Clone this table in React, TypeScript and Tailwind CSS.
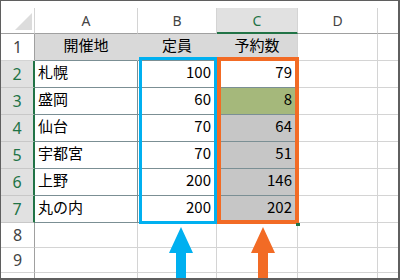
const jp = "font-['Noto_Sans_CJK_JP','Noto_Sans',sans-serif]"

type Row = { no: number; a: string; b: number; c: number; cBg: string }

const rows: Row[] = [
    { no: 2, a: "札幌", b: 100, c: 79, cBg: "bg-white" },
    { no: 3, a: "盛岡", b: 60, c: 8, cBg: "bg-[#a5b87b]" },
    { no: 4, a: "仙台", b: 70, c: 64, cBg: "bg-[#c6c6c6]" },
    { no: 5, a: "宇都宮", b: 70, c: 51, cBg: "bg-[#c6c6c6]" },
    { no: 6, a: "上野", b: 200, c: 146, cBg: "bg-[#c6c6c6]" },
    { no: 7, a: "丸の内", b: 200, c: 202, cBg: "bg-[#c6c6c6]" },
]

function RowHead({ no, selected }: { no: number; selected?: boolean }) {
    return (
        <div
            className={
                selected
                    ? "w-[34px] shrink-0 flex items-center justify-center border-b border-b-[#c8c8c8] border-r-2 border-r-[#217346] bg-[#e1e1e1] text-[#217346] text-[16px] font-['Noto_Sans',sans-serif]"
                    : "w-[34px] shrink-0 flex items-center justify-center border-b border-b-[#d4d4d4] border-r border-r-[#a0a0a0] bg-white text-[#444] text-[16px] font-['Noto_Sans',sans-serif]"
            }
        >
            {no}
        </div>
    )
}

function EmptyTail() {
    return (
        <>
            <div className="w-[80px] shrink-0 border-r border-b border-[#d4d4d4]" />
            <div className="flex-1 border-b border-[#d4d4d4]" />
        </>
    )
}

function ColHead({ label, w, selected }: { label: string; w: string; selected?: boolean }) {
    return (
        <div
            className={`${w} shrink-0 flex items-center justify-center text-[14px] font-['Noto_Sans',sans-serif] border-r border-r-[#d4d4d4] ${
                selected
                    ? "bg-[#e1e1e1] text-[#217346] border-b-2 border-b-[#217346]"
                    : "bg-white text-[#444] border-b border-b-[#a0a0a0]"
            }`}
        >
            {label}
        </div>
    )
}

export default function App() {
    return (
        <div className={`relative w-[400px] h-[280px] overflow-hidden bg-white border-t border-l border-r-2 border-b-2 border-[#5f5f5f] ${jp}`}>
            <div className="h-[7px]" />

            {/* column headers */}
            <div className="flex h-[26px]">
                <div className="relative w-[34px] shrink-0 border-r border-r-[#d4d4d4] border-b border-b-[#a0a0a0]">
                    <svg className="absolute left-[14px] top-[5px]" width="18" height="18" viewBox="0 0 18 18">
                        <polygon points="0,17 17,17 17,0" fill="#dcdcdc" />
                    </svg>
                </div>
                <ColHead label="A" w="w-[103px]" />
                <ColHead label="B" w="w-[79px]" />
                <ColHead label="C" w="w-[81px]" selected />
                <ColHead label="D" w="w-[80px]" />
                <div className="flex-1 border-b border-b-[#a0a0a0]" />
            </div>

            {/* row 1 */}
            <div className="flex h-[27px]">
                <RowHead no={1} />
                <div className="w-[103px] shrink-0 flex items-center justify-center pb-[3px] bg-[#d9d9d9] border-r border-r-[#d9d9d9] border-b border-b-[#7b8f94] text-[15px] text-black">
                    開催地
                </div>
                <div className="w-[79px] shrink-0 flex items-center justify-center pb-[3px] bg-[#d9d9d9] border-r border-r-[#d9d9d9] border-b border-b-[#7b8f94] text-[15px] text-black">
                    定員
                </div>
                <div className="w-[81px] shrink-0 flex items-center justify-center pb-[3px] bg-[#d9d9d9] border-r border-r-[#d4d4d4] border-b border-b-[#7b8f94] text-[15px] text-black">
                    予約数
                </div>
                <EmptyTail />
            </div>

            {rows.map((r) => (
                <div key={r.no} className="flex h-[27px]">
                    <RowHead no={r.no} selected />
                    <div className="w-[103px] shrink-0 flex items-center pl-[3px] pb-[3px] border-r border-b border-[#7b8f94] text-[15px] text-black">
                        {r.a}
                    </div>
                    <div className="w-[79px] shrink-0 flex items-center justify-end pr-[5px] pb-[3px] border-r border-b border-[#7b8f94] text-[15px] text-black">
                        {r.b}
                    </div>
                    <div className={`w-[81px] shrink-0 flex items-center justify-end pr-[5px] pb-[3px] border-r border-b border-[#7b8f94] text-[15px] text-black ${r.cBg}`}>
                        {r.c}
                    </div>
                    <EmptyTail />
                </div>
            ))}

            {[8, 9, 10].map((n) => (
                <div key={n} className="flex h-[25px]">
                    <RowHead no={n} />
                    <div className="w-[103px] shrink-0 border-r border-b border-[#d4d4d4]" />
                    <div className="w-[79px] shrink-0 border-r border-b border-[#d4d4d4]" />
                    <div className="w-[81px] shrink-0 border-r border-b border-[#d4d4d4]" />
                    <EmptyTail />
                </div>
            ))}

            {/* highlight frames */}
            <div className="absolute left-[138px] top-[56px] w-[78px] h-[167px] border-[3px] border-[#00b0f0]" />
            <div className="absolute left-[216px] top-[56px] w-[82px] h-[167px] border-[4px] border-[#f26b25]" />
            <div className="absolute left-[295px] top-[222px] w-[4px] h-[3px] bg-[#217346]" />

            {/* arrows */}
            <svg className="absolute left-[167px] top-[226px]" width="26" height="54" viewBox="0 0 26 54">
                <polygon points="13,0 25,26 18,26 18,54 8,54 8,26 1,26" fill="#00b0f0" />
            </svg>
            <svg className="absolute left-[249px] top-[226px]" width="26" height="54" viewBox="0 0 26 54">
                <polygon points="13,0 25,26 18,26 18,54 8,54 8,26 1,26" fill="#f26b25" />
            </svg>
        </div>
    )
}
